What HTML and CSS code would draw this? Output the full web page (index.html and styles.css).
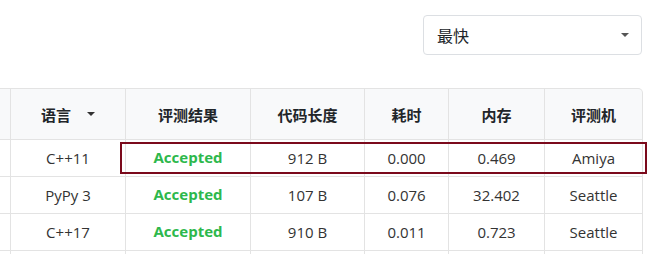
FILE: index.html
```html
<!DOCTYPE html>
<html lang="zh">
<head>
<meta charset="utf-8">
<link rel="stylesheet" href="styles.css">
</head>
<body>
<div class="toolbar">
  <div class="select">
    <span class="select-value">最快</span>
    <span class="caret"></span>
  </div>
</div>
<div class="table-wrap">
  <div class="grid">
    <div class="row head">
      <div class="cell stub"></div>
      <div class="cell">语言<span class="caret sort"></span></div>
      <div class="cell">评测结果</div>
      <div class="cell">代码长度</div>
      <div class="cell">耗时</div>
      <div class="cell">内存</div>
      <div class="cell last">评测机</div>
    </div>
    <div class="row">
      <div class="cell stub"></div>
      <div class="cell">C++11</div>
      <div class="cell ac">Accepted</div>
      <div class="cell">912 B</div>
      <div class="cell">0.000</div>
      <div class="cell">0.469</div>
      <div class="cell">Amiya</div>
    </div>
    <div class="row">
      <div class="cell stub"></div>
      <div class="cell">PyPy 3</div>
      <div class="cell ac">Accepted</div>
      <div class="cell">107 B</div>
      <div class="cell">0.076</div>
      <div class="cell">32.402</div>
      <div class="cell">Seattle</div>
    </div>
    <div class="row">
      <div class="cell stub"></div>
      <div class="cell">C++17</div>
      <div class="cell ac">Accepted</div>
      <div class="cell">910 B</div>
      <div class="cell">0.011</div>
      <div class="cell">0.723</div>
      <div class="cell">Seattle</div>
    </div>
    <div class="row">
      <div class="cell stub"></div>
      <div class="cell"></div>
      <div class="cell"></div>
      <div class="cell"></div>
      <div class="cell"></div>
      <div class="cell"></div>
      <div class="cell"></div>
    </div>
  </div>
  <div class="highlight"></div>
</div>
</body>
</html>
```

FILE: styles.css
```css
html, body {
  margin: 0;
  padding: 0;
  background: #fff;
}
body {
  font-family: "Open Sans", "Noto Sans CJK SC", sans-serif;
  font-size: 15px;
  color: #333;
  width: 671px;
  height: 254px;
  overflow: hidden;
}
.toolbar {
  display: flex;
  justify-content: flex-end;
  padding: 15px 29px 0 0;
}
.select {
  box-sizing: border-box;
  width: 219px;
  height: 40px;
  border: 1px solid #dcdfe3;
  border-radius: 4px;
  display: flex;
  align-items: center;
  justify-content: space-between;
  padding: 0 12px 0 13px;
  font-size: 16px;
  color: #212529;
}
.caret {
  display: inline-block;
  width: 0;
  height: 0;
  border-left: 4px solid transparent;
  border-right: 4px solid transparent;
  border-top: 4px solid #555;
}
.table-wrap {
  position: relative;
  margin-top: 33px;
  width: 643px;
}
.grid {
  display: grid;
  grid-template-columns: 11px 115px 125px 114px 84px 96px 98px;
}
.row {
  display: contents;
}
.cell {
  box-sizing: border-box;
  height: 37px;
  border-right: 1px solid #e3e3e3;
  border-bottom: 1px solid #e3e3e3;
  display: flex;
  align-items: center;
  justify-content: center;
  white-space: nowrap;
}
.head .cell {
  height: 52px;
  background: #f8f9fa;
  border-top: 1px solid #e3e3e3;
  font-weight: 700;
  color: #212529;
}
.head .last {
  border-top-right-radius: 5px;
}
.sort {
  margin-left: 16px;
  border-top-color: #333;
}
.ac {
  font-weight: 700;
  color: #2db84c;
  padding-bottom: 3px;
}
.highlight {
  position: absolute;
  left: 120px;
  top: 54px;
  width: 527px;
  height: 32px;
  box-sizing: border-box;
  border: 2px solid #7b0a1c;
}
```
